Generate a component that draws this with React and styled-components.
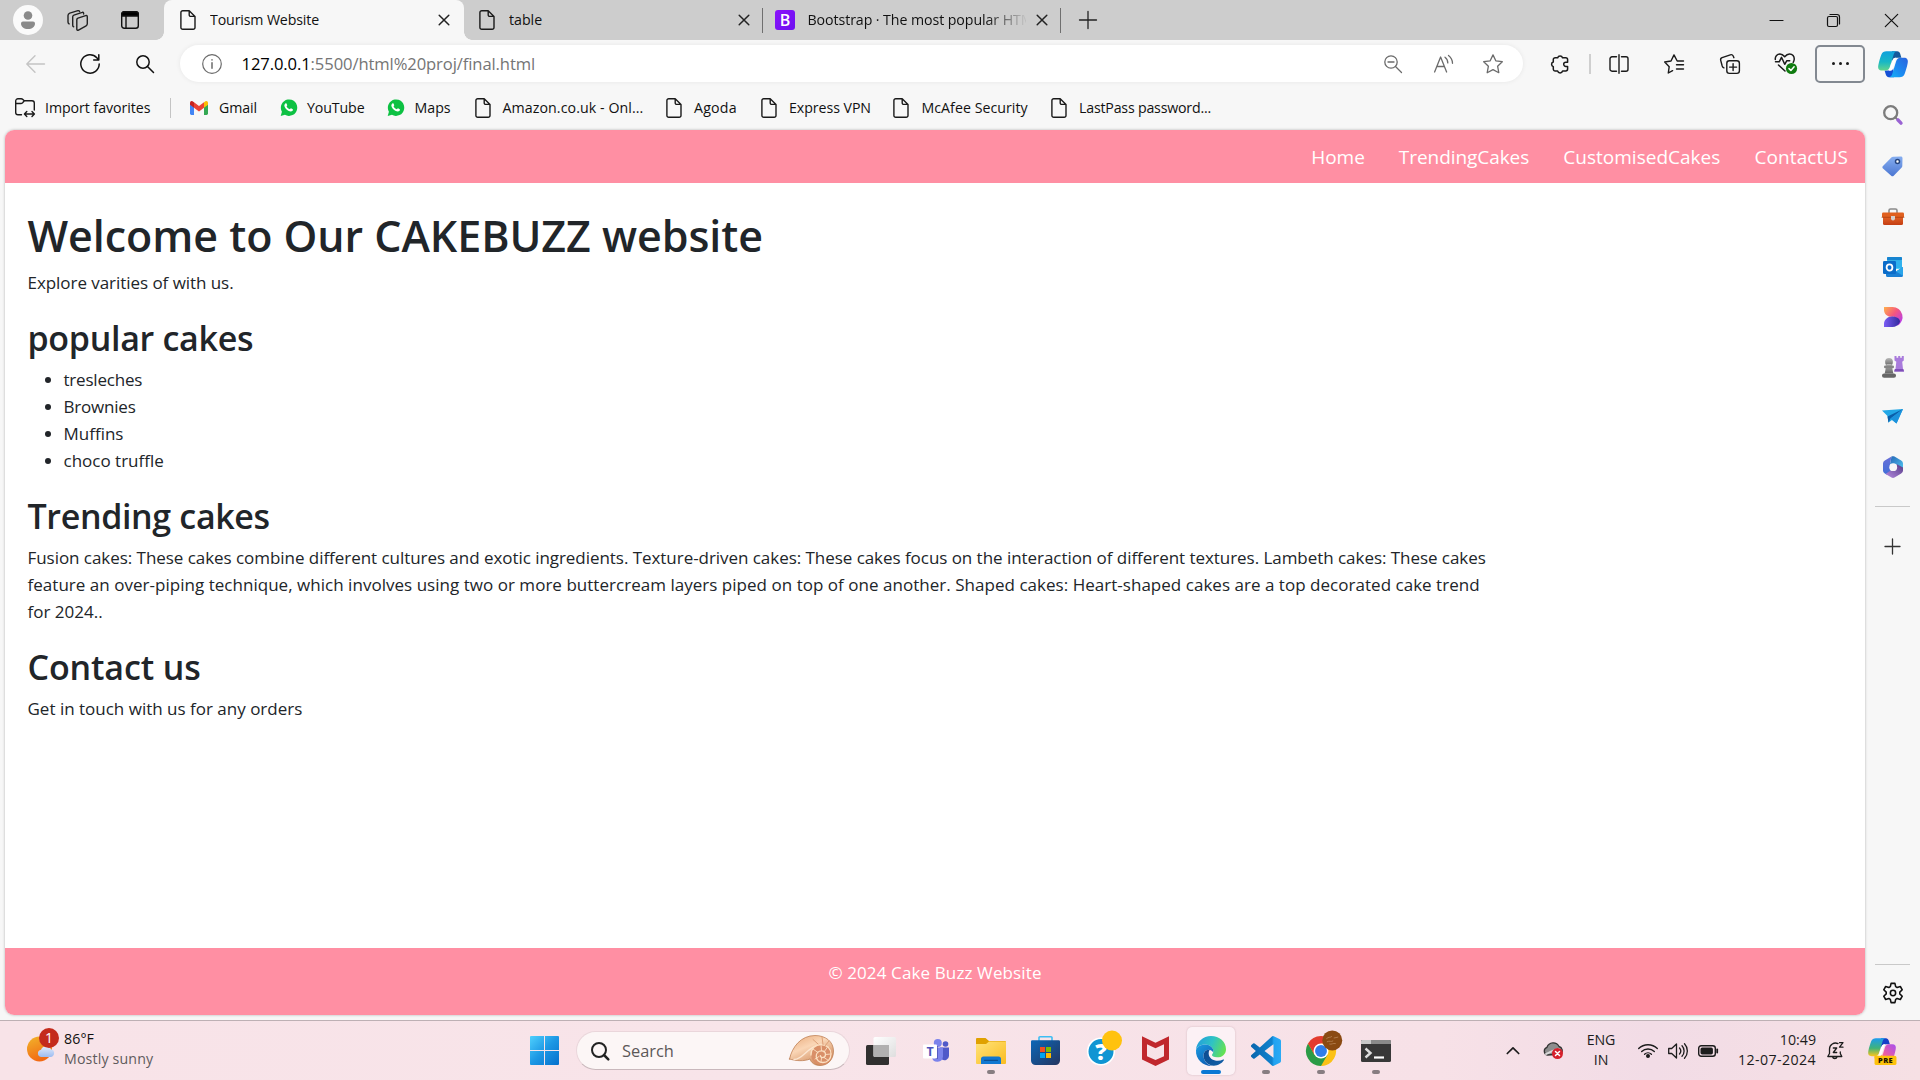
import React from "react";
import styled, { createGlobalStyle, css } from "styled-components";

const GlobalStyle = createGlobalStyle`
  *, *::before, *::after { box-sizing: border-box; }
  body {
    margin: 0;
    background: #f7f7f7;
    color: #111;
    font-family: "Open Sans", "Noto Sans", sans-serif;
    overflow: hidden;
  }
`;

/* ---------- shared ---------- */

const Label = styled.span`
  font-size: ${(p) => p.$size || 14.2}px;
  line-height: 20px;
  letter-spacing: ${(p) => p.$track || 0}px;
  color: ${(p) => p.$color || "inherit"};
  white-space: nowrap;
`;

const Glyph = styled.svg`
  display: block;
  flex: none;
  width: ${(p) => p.$w}px;
  height: ${(p) => p.$h || p.$w}px;
  fill: none;
  stroke: ${(p) => p.$stroke || "none"};
  stroke-width: ${(p) => p.$sw || 1.4};
  stroke-linecap: round;
  stroke-linejoin: round;
  overflow: visible;
`;

const Screen = styled.div`
  width: 1920px;
  height: 1080px;
  display: flex;
  flex-direction: column;
  background: #f7f7f7;
`;

/* ---------- tab strip ---------- */

const TabStrip = styled.header`
  display: flex;
  height: 40px;
  flex: none;
  background: #cdcdcd;
`;

const StripTools = styled.div`
  display: flex;
  align-items: center;
  width: 164px;
  padding-left: 13px;
  gap: 24px;
`;

const Avatar = styled.div`
  width: 30px;
  height: 30px;
  border-radius: 50%;
  background: #fafafa;
  display: grid;
  place-items: center;
`;

const StripSlot = styled.div`
  width: ${(p) => p.$w}px;
  display: grid;
  place-items: center;
`;

const Tab = styled.div`
  position: relative;
  display: flex;
  align-items: center;
  width: ${(p) => p.$w}px;
  padding-left: ${(p) => p.$pad}px;
  padding-right: ${(p) => (p.$active ? 15 : 13.5)}px;
  ${(p) =>
    p.$active &&
    css`
      background: #f7f7f7;
      border-radius: 8px 8px 0 0;
      &::before,
      &::after {
        content: "";
        position: absolute;
        bottom: 0;
        width: 8px;
        height: 8px;
      }
      &::before {
        left: -8px;
        background: radial-gradient(circle at 0 0, transparent 7.5px, #f7f7f7 8px);
      }
      &::after {
        right: -8px;
        background: radial-gradient(circle at 100% 0, transparent 7.5px, #f7f7f7 8px);
      }
    `}
`;

const TabTitle = styled(Label)`
  flex: 1;
  overflow: hidden;
  margin-left: ${(p) => p.$gap}px;
  ${(p) =>
    p.$fade &&
    css`
      margin-right: 11px;
      mask-image: linear-gradient(to right, #000 178px, rgba(0, 0, 0, 0.08) 216px);
    `}
`;

const TabDivider = styled.div`
  width: 1px;
  height: 25px;
  align-self: center;
  background: #6f6f6f;
`;

const BootstrapMark = styled.div`
  width: 20px;
  height: 20px;
  border-radius: 3px;
  background: linear-gradient(135deg, #8a12fb, #6d10f0);
  color: #fff;
  font-size: 16px;
  font-weight: 600;
  line-height: 20px;
  text-align: center;
`;

const WindowControls = styled.div`
  margin-left: auto;
  display: flex;
`;

const ControlButton = styled.div`
  width: 57.5px;
  display: grid;
  place-items: center;
`;

/* ---------- browser body ---------- */

const BrowserBody = styled.div`
  display: flex;
  height: 980px;
  flex: none;
`;

const MainColumn = styled.div`
  width: 1865px;
  display: flex;
  flex-direction: column;
`;

const Toolbar = styled.div`
  display: flex;
  align-items: center;
  height: 47px;
`;

const NavButton = styled.div`
  width: 55px;
  display: grid;
  place-items: center;
`;

const NavGroup = styled.div`
  display: flex;
  width: 180px;
  padding-left: 7.5px;
`;

const AddressBar = styled.div`
  display: flex;
  align-items: center;
  width: 1343px;
  height: 37px;
  padding: 0 5px 0 22px;
  border-radius: 19px;
  background: #fff;
  box-shadow: 0 0 5px rgba(0, 0, 0, 0.07);
`;

const Url = styled(Label)`
  margin-left: 19.5px;
  margin-right: auto;
`;

const BarAction = styled.div`
  width: 50px;
  display: grid;
  place-items: center;
`;

const ToolGroup = styled.div`
  display: flex;
  align-items: center;
  margin-left: 8.5px;
`;

const ToolButton = styled.div`
  width: ${(p) => p.$w || 55.5}px;
  display: grid;
  place-items: center;
`;

const ToolDivider = styled.div`
  width: 2px;
  height: 20px;
  background: #cfcfcf;
`;

const MenuButton = styled.div`
  width: 50px;
  height: 38px;
  margin-left: auto;
  border: 2px solid #838991;
  border-radius: 5px;
  display: flex;
  align-items: center;
  justify-content: center;
  gap: 4px;
`;

const Dot = styled.i`
  width: 3px;
  height: 3px;
  border-radius: 50%;
  background: #1a1a1a;
`;

const Bookmarks = styled.div`
  display: flex;
  align-items: center;
  height: 43px;
  padding-left: 15px;
  padding-bottom: 1.5px;
`;

const Bookmark = styled.div`
  display: flex;
  align-items: center;
  width: ${(p) => p.$w}px;
`;

const BookmarkIcon = styled.div`
  width: ${(p) => p.$w}px;
  flex: none;
`;

const BookmarkDivider = styled.div`
  width: 1px;
  height: 20px;
  margin-right: 19px;
  background: #c4c4c4;
`;

/* ---------- page ---------- */

const Viewport = styled.div`
  display: flex;
  flex-direction: column;
  width: 1860px;
  height: 885px;
  margin-left: 5px;
  border-radius: 9px;
  overflow: hidden;
  background: #fff;
  box-shadow: 0 0 3px rgba(0, 0, 0, 0.28);
`;

const SiteNav = styled.nav`
  display: flex;
  align-items: center;
  justify-content: flex-end;
  gap: 34px;
  height: 53px;
  padding: 0 17px 0 0;
  background: #ff8fa3;
  color: #fff;
`;

const Article = styled.main`
  flex: 1;
  padding: 22.5px 22.5px 0;
  color: #212529;
`;

const Title = styled.h1`
  margin: 0 0 4px;
  font-size: 43px;
  line-height: 59px;
  font-weight: 600;
  letter-spacing: -0.04px;
`;

const Heading = styled.h2`
  margin: 0 0 4px;
  font-size: 34px;
  line-height: 48.2px;
  font-weight: 600;
  letter-spacing: ${(p) => p.$track || -0.3}px;
`;

const Paragraph = styled.p`
  margin: 0 0 18px;
  font-size: 17px;
  line-height: 27px;
`;

const Line = styled.span`
  display: block;
  white-space: nowrap;
  letter-spacing: ${(p) => p.$track || 0}px;
`;

const CakeList = styled.ul`
  margin: 0 0 18px;
  padding-left: 36px;
  font-size: 17px;
  line-height: 27px;
`;

const Cake = styled.li`
  letter-spacing: ${(p) => p.$track || 0}px;
`;

const SiteFooter = styled.footer`
  height: 67px;
  padding-top: 14px;
  background: #ff8fa3;
  color: #fff;
  text-align: center;
`;

/* ---------- sidebar ---------- */

const Sidebar = styled.aside`
  width: 55px;
  display: flex;
  flex-direction: column;
  align-items: center;
`;

const SideSlot = styled.div`
  width: 55px;
  height: ${(p) => p.$h || 50}px;
  flex: none;
  display: grid;
  place-items: center;
`;

const SideDivider = styled.div`
  width: 35px;
  height: 1px;
  background: #c9c9c9;
`;

const SideBottom = styled.div`
  margin-top: auto;
  display: flex;
  flex-direction: column;
  align-items: center;
`;

/* ---------- taskbar ---------- */

const Taskbar = styled.div`
  display: grid;
  grid-template-columns: 517px 886px 1fr;
  height: 60px;
  border-top: 1px solid #bdb0b4;
  background: linear-gradient(90deg, #f8e3e8 0%, #f8e4e9 40%, #f7e1e7 75%, #f2dce6 86%, #f6e0e4 100%);
`;

const Weather = styled.div`
  display: flex;
  padding-left: 26px;
  padding-top: 5px;
  gap: 8px;
`;

const TwoLines = styled.div`
  display: flex;
  flex-direction: column;
  align-items: ${(p) => p.$align || "flex-start"};
  padding-top: ${(p) => p.$top || 0}px;
  padding-bottom: ${(p) => p.$bottom || 0}px;
`;

const Apps = styled.div`
  display: flex;
  align-items: center;
`;

const AppSlot = styled.div`
  position: relative;
  width: 55px;
  height: 59px;
  display: grid;
  place-items: center;
`;

const ActiveTile = styled.div`
  width: 48px;
  height: 48px;
  border-radius: 5px;
  background: #fcf1f5;
  box-shadow: 0 0 2px rgba(120, 80, 95, 0.3);
  display: grid;
  place-items: center;
`;

const Running = styled.i`
  position: absolute;
  bottom: 6px;
  left: 50%;
  transform: translateX(-50%);
  width: ${(p) => (p.$active ? 20 : 8)}px;
  height: 4px;
  border-radius: 2px;
  background: ${(p) => (p.$active ? "#0a78d4" : "#877d81")};
`;

const SearchPill = styled.div`
  display: flex;
  align-items: center;
  width: 274px;
  height: 39px;
  margin: 0 4px;
  padding: 0 15px 0 14px;
  border-radius: 20px;
  background: #fcf6f6;
  border: 1px solid #ead6db;
  border-bottom-color: #c9b8bc;
  gap: 13px;
`;

const ShellSlot = styled.div`
  margin-left: auto;
`;

const Tray = styled.div`
  display: flex;
  align-items: center;
  justify-content: flex-end;
  padding-right: 24px;
  color: #1c1c1c;
`;

const TraySlot = styled.div`
  width: ${(p) => p.$w}px;
  display: flex;
  justify-content: ${(p) => p.$justify || "center"};
`;

/* ---------- icons ---------- */

const PageIcon = () => (
  <Glyph $w={16} $h={20} viewBox="0 0 16 20" $stroke="#1a1a1a" $sw={1.4}>
    <path d="M2.7.8h6.5L15 6.4v11a1.8 1.8 0 0 1-1.8 1.8H2.7A1.8 1.8 0 0 1 .9 17.400V2.600A1.8 1.8 0 0 1 2.700.8zM9.200 1v3.900A1.500 1.500 0 0 0 10.700 6.400H14.800" />
  </Glyph>
);

const CloseIcon = () => (
  <Glyph $w={10} viewBox="0 0 10 10" $stroke="#222" $sw={1.5}>
    <path d="M.2.2l9.600 9.600M9.800.2L.2 9.800" />
  </Glyph>
);

const Whatsapp = () => (
  <Glyph $w={17} viewBox="0 0 24 24">
    <path d="M1 24l1.700-6A11.600 11.600 0 1 1 7 22.300z" fill="#0dc143" />
    <path
      d="M8.300 6c.5 0 .8 0 1 .6l.9 2c.1.400 0 .6-.9 1.700 0 1.100 2.500 3.800 4.700 4.300.8-.7 1.100-1.600 1.600-1.400l2.400 1.100c.4.200.3 1.600-.3 2.200-1.500 1.500-3.600 1.200-6 0-2.800-1.500-5.300-4.400-5.600-6.900C6 8 7.100 6.100 8.300 6z"
      fill="#fff"
    />
  </Glyph>
);

const Gmail = () => (
  <Glyph $w={18} $h={14} viewBox="0 0 18 14">
    <path d="M0 3l4 3v8H1.400A1.400 1.400 0 0 1 0 12.600z" fill="#4285f4" />
    <path d="M18 3l-4 3v8h2.600a1.400 1.400 0 0 0 1.400-1.400z" fill="#34a853" />
    <path d="M14 1.200L15.500.3C16.800-.4 18 .6 18 2v1.700L14 6.700z" fill="#fbbc04" />
    <path d="M4 1.200L2.500.3C1.200-.4 0 .6 0 2v1.700L4 6.700z" fill="#c5221f" />
    <path d="M4 1.200l5 3.900 5-3.900v5.500l-5 3.800-5-3.800z" fill="#ea4335" />
  </Glyph>
);

const Workspaces = () => (
  <Glyph $w={21} viewBox="0 0 21 21" $stroke="#222" $sw={1.4}>
    <path d="M11 8.200l7.600-2.600c1-.3 1.700.1 1.700 1.100v7.100c0 .9-.4 1.600-1.200 2l-7.600 4.300c-.9.500-1.700.1-1.700-.9V9.800c0-.8.4-1.300 1.200-1.600z" />
    <path d="M16.600 4V3.300c0-.9-.6-1.300-1.400-1L6.900 5.100c-.8.300-1.200.8-1.200 1.600v8.500c0 .8.300 1.300 1 1.600M12.600 1.500c-.3-.8-.9-1-1.700-.8L2.800 3.200C1.700 3.600 1 4.400 1 5.500v6.400c0 .9.300 1.500 1.100 2" />
  </Glyph>
);

const VerticalTabs = () => (
  <Glyph $w={18} viewBox="0 0 18 18" $stroke="#111" $sw={1.4}>
    <rect x=".7" y=".7" width="16.600" height="16.600" rx="2.500" />
    <path d="M.7 3.200A2.500 2.500 0 0 1 3.200.7h11.600a2.500 2.500 0 0 1 2.500 2.500V5H.7z" fill="#000" />
    <path d="M5 5v12" />
  </Glyph>
);

const Extension = () => (
  <Glyph $w={20} viewBox="0 0 20 20" $stroke="#1a1a1a" $sw={1.5}>
    <path d="M5.200 3.700h2.500a2.500 2.500 0 0 1 4.800 0h3.200a1.900 1.900 0 0 1 1.900 1.900v2.600h-1.800a2.100 2.100 0 0 0 0 4.200h1.800v2.700a1.900 1.900 0 0 1-1.900 1.900h-3.100a2.600 2.600 0 0 1-5 0H5.200a1.900 1.900 0 0 1-1.900-1.900v-2.500a2.400 2.400 0 0 1 0-4.600V5.600a1.900 1.900 0 0 1 1.900-1.900z" />
  </Glyph>
);

const SplitScreen = () => (
  <Glyph $w={20} viewBox="0 0 20 20" $stroke="#1a1a1a" $sw={1.4}>
    <path d="M7.500 2.800H3A2 2 0 0 0 1 4.800v10.400a2 2 0 0 0 2 2h4.500M12.500 2.800H17a2 2 0 0 1 2 2v10.400a2 2 0 0 1-2 2h-4.500M10 .8v18.400" />
  </Glyph>
);

const Favorites = () => (
  <Glyph $w={20} viewBox="0 0 20 20" $stroke="#1a1a1a" $sw={1.4}>
    <path d="M19.500 7h-6.300L10 .9 7 7 .7 8l4.500 4.700-.9 6.300 4.300-2.300M12.500 10.800h7M12.500 15h7" />
  </Glyph>
);

const Collections = () => (
  <Glyph $w={20} viewBox="0 0 20 20" $stroke="#1a1a1a" $sw={1.4}>
    <rect x="6.800" y="6.800" width="12.600" height="12.600" rx="2.600" />
    <path d="M13.100 9.600v7M9.600 13.100h7M3.900 13.900C2.800 13.500 2.500 12.900 2.200 12L.7 6.400c-.3-1.200.2-2.300 1.400-2.700L10.300.8c1.300-.4 2.400.1 2.900 1.200l.7 1.700" />
  </Glyph>
);

const Essentials = () => (
  <Glyph $w={24} $h={21} viewBox="0 0 24 21" $stroke="#1a1a1a" $sw={1.5}>
    <path d="M1.300 6.500C1 3 3.300 1 6 1c2 0 3.500 1.300 4.700 2.800C12 2.200 13.500 1 15.500 1c3 0 5 2.400 4.700 5.500-.1 1-.5 2-1 2.800M1.500 8.800h3.700l2.300-4.500 3.200 7 2-3.500h3M4.500 12l6.500 6" />
    <circle cx="17.500" cy="15.500" r="5.600" fill="#0f7b0f" stroke="none" />
    <path d="M15 15.600l1.900 1.800 3.200-3.600" stroke="#fff" />
  </Glyph>
);

const Copilot = ({ size = 30, pre }) => {
  const id = pre ? "cpPre" : "cpMain";
  return (
    <Glyph $w={size} $h={size * 0.88} viewBox="0 0 30 26.400">
      <defs>
        <linearGradient id={`${id}A`} x1="0" y1="0" x2="0" y2="1">
          <stop offset="0" stopColor={pre ? "#1c9bf0" : "#0fa0dd"} />
          <stop offset=".55" stopColor={pre ? "#3fb37a" : "#18b7c6"} />
          <stop offset="1" stopColor={pre ? "#ffc61a" : "#63d58c"} />
        </linearGradient>
        <linearGradient id={`${id}B`} x1="1" y1="0" x2="0" y2="1">
          <stop offset="0" stopColor={pre ? "#a64ef0" : "#2a62dd"} />
          <stop offset=".6" stopColor={pre ? "#ef5f9f" : "#1b8df2"} />
          <stop offset="1" stopColor={pre ? "#ff9f62" : "#12b4f5"} />
        </linearGradient>
      </defs>
      <path d="M14 .2h5.200c1.600 0 2.600 1.200 3 2.600l1.200 4h-5.600c-2 0-2.600 1-3 2.400l-1.200 3.600z" fill={pre ? "#1540c8" : "#155a9c"} />
      <path d="M16 26.200h-5.200c-1.600 0-2.600-1.200-3-2.600l-1.200-4h5.600c2 0 2.600-1 3-2.400z" fill={pre ? "#f9a03f" : "#1550d6"} />
      <path d="M8.500.2H19c-2 0-2.800 1.600-3.400 3.600L12 15.600c-.8 2.700-2 4-4.600 4H4c-3 0-4.400-2-3.700-5.300C1 10.500 2.300 6.200 3.400 3.500 4.300 1.200 6 .2 8.500.2z" fill={`url(#${id}A)`} />
      <path d="M21.500 26.200H11c2 0 2.800-1.600 3.400-3.600L18 10.800c.8-2.700 2-4 4.600-4H26c3 0 4.400 2 3.700 5.300-.7 3.800-2 8.100-3.100 10.800-.9 2.300-2.600 3.300-5.100 3.300z" fill={`url(#${id}B)`} />
      <path d="M17.300 7.500c-1.500.3-2.100 1.300-2.500 2.700l-2 6.500c-.3 1-.6 1.700-1 2.200 1.400-.3 2-1.200 2.400-2.500l2.100-6.600c.3-1 .6-1.700 1-2.300z" fill="#fff" stroke="#fff" strokeWidth="1.600" />
      {pre && <rect x="7" y="19" width="23.500" height="10" rx="2" fill="#fdc20b" />}
      {pre && (
        <text x="18.800" y="26.700" fontSize="8" fontWeight="800" fill="#1a1400" textAnchor="middle" letterSpacing=".4">
          PRE
        </text>
      )}
    </Glyph>
  );
};

const SideSearch = () => (
  <Glyph $w={20} viewBox="0 0 20 20">
    <circle cx="7.700" cy="7.700" r="6.500" stroke="#7c7c7c" strokeWidth="2.300" />
    <path d="M14.800 14.800l3.200 3.300" stroke="#9a63d3" strokeWidth="3.400" />
    <path d="M12.200 12.200l1 1" stroke="#7c7c7c" strokeWidth="2" />
  </Glyph>
);

const Shopping = () => (
  <Glyph $w={21} viewBox="0 0 21 21">
    <defs>
      <linearGradient id="tagFill" x1="0" y1="0" x2="0" y2="1">
        <stop offset="0" stopColor="#86aef0" />
        <stop offset="1" stopColor="#4b76d2" />
      </linearGradient>
    </defs>
    <path d="M11 .7L18.800.5c1 0 1.700.6 1.700 1.600l-.2 8c0 .6-.2 1-.6 1.400l-8 8.200c-.8.800-1.700.8-2.500 0L1 12.500c-.8-.8-.8-1.700 0-2.500l8.600-8.700c.4-.4.8-.6 1.400-.6z" fill="url(#tagFill)" />
    <circle cx="15.500" cy="5.500" r="2" fill="#fff" stroke="#27467f" strokeWidth="1.500" />
  </Glyph>
);

const Toolbox = () => (
  <Glyph $w={22} $h={17} viewBox="0 0 22 17">
    <defs>
      <linearGradient id="boxFill" x1="0" y1="0" x2="0" y2="1">
        <stop offset="0" stopColor="#e86b2a" />
        <stop offset="1" stopColor="#c43d12" />
      </linearGradient>
    </defs>
    <path d="M7 5V2.500A1.500 1.500 0 0 1 8.500 1h5A1.500 1.500 0 0 1 15 2.500V5" stroke="#8b8b8b" strokeWidth="1.600" />
    <rect x="1" y="7" width="20" height="10" rx="1.500" fill="url(#boxFill)" />
    <rect x="0" y="4.500" width="22" height="5" rx="1.200" fill="#e0601f" />
    <path d="M0 9.300h22" stroke="#a63a10" strokeWidth=".7" />
    <path d="M9 8h4v2.600a2 2 0 0 1-4 0z" fill="#d5cfcc" />
  </Glyph>
);

const Outlook = () => (
  <Glyph $w={20} viewBox="0 0 20 20">
    <rect x="4" y="0" width="15" height="12" rx="1" fill="#50d0f5" />
    <rect x="4" y="0" width="15" height="3.500" rx="1" fill="#1784d0" />
    <path d="M11 3.500h8V11h-8z" fill="#2fb2ee" />
    <path d="M3 9.500l10 5 7-4.500v8.500a1.500 1.500 0 0 1-1.500 1.500h-14A1.500 1.500 0 0 1 3 18.500z" fill="#1a7fd4" />
    <path d="M20 10v8.700L13 14.500z" fill="#2aa5ea" />
    <rect x="0" y="4" width="13" height="13" rx="1.300" fill="#0a6cc9" />
    <ellipse cx="6.500" cy="10.500" rx="2.900" ry="3.200" stroke="#fff" strokeWidth="1.800" />
  </Glyph>
);

const Designer = () => (
  <Glyph $w={20} $h={22} viewBox="0 0 20 22">
    <defs>
      <linearGradient id="dsTop" x1="0" y1="0" x2="1" y2=".8">
        <stop offset="0" stopColor="#ffb14a" />
        <stop offset=".5" stopColor="#f5577d" />
        <stop offset="1" stopColor="#b43cf0" />
      </linearGradient>
      <linearGradient id="dsBottom" x1="0" y1="0" x2="1" y2="0">
        <stop offset="0" stopColor="#7a5cf5" />
        <stop offset="1" stopColor="#312a9c" />
      </linearGradient>
    </defs>
    <path d="M1 1h8.500a10 10 0 0 1 5 18.700L11 10.500C5 12 1 8 1 4z" fill="url(#dsTop)" />
    <path d="M1 21v-3.200c0-4 3.500-7.300 8-7.300 5 0 8 2.300 8 5.500-1.800 3.300-4.500 5-7.500 5z" fill="url(#dsBottom)" />
  </Glyph>
);

const Games = () => (
  <Glyph $w={22} viewBox="0 0 22 22">
    <defs>
      <linearGradient id="pawn" x1="0" y1="0" x2="0" y2="1">
        <stop offset="0" stopColor="#b8b8b8" />
        <stop offset="1" stopColor="#656565" />
      </linearGradient>
    </defs>
    <path d="M12.500 0h2v1.800h1.700V0h2v1.800h1.600V0h2v4.500l-1.600 1.300.8 7.200 1 2.500h-9.500l1-2.500.8-7.200-1.800-1.300z" fill="#a97bdc" />
    <path d="M12.800 13h8.500l.8 2.600H12z" fill="#7f4fb8" />
    <circle cx="7" cy="6" r="3.900" fill="url(#pawn)" />
    <path d="M4.500 8h5l1.800 9.500H2.700z" fill="url(#pawn)" />
    <rect x="2" y="9.500" width="10" height="2.700" rx="1.300" fill="#858585" />
    <rect x="0" y="17.500" width="14" height="4.300" rx="2.100" fill="#666" />
  </Glyph>
);

const Drop = () => (
  <Glyph $w={21} $h={15} viewBox="0 0 21 15">
    <path d="M0 1.500L21 0 14.500 14.500 10 11 6.500 13.500 5.500 7z" fill="#22a7e6" />
    <path d="M5.500 7.500L21 0 8.500 9.500 6.500 13.800z" fill="#0b5ea9" />
    <path d="M8.500 9.500L21 0l-6.500 14.500z" fill="#1c92dc" />
  </Glyph>
);

const Office = () => (
  <Glyph $w={20} $h={22} viewBox="0 0 20 22">
    <defs>
      <linearGradient id="ofA" x1="0" y1="0" x2="0" y2="1">
        <stop offset="0" stopColor="#6a6fd8" />
        <stop offset="1" stopColor="#3f6fd8" />
      </linearGradient>
      <linearGradient id="ofB" x1="0" y1="0" x2="1" y2="1">
        <stop offset="0" stopColor="#2465b5" />
        <stop offset="1" stopColor="#4fc3f0" />
      </linearGradient>
      <linearGradient id="ofC" x1="0" y1="1" x2="1" y2="0">
        <stop offset="0" stopColor="#b58ae0" />
        <stop offset="1" stopColor="#553a86" />
      </linearGradient>
    </defs>
    <path d="M8.500.5L1.800 4.400A3.400 3.400 0 0 0 0 7.400v7.200c0 1.200.7 2.300 1.800 2.900l2.700 1.500L8 14.500 7 8z" fill="url(#ofA)" />
    <path d="M8.500.5c1-.5 2-.5 3 0l6.700 3.900A3.400 3.400 0 0 1 20 7.400v5.100L13 8.200 7 8.500z" fill="url(#ofB)" />
    <path d="M20 11.500v3.100c0 1.200-.7 2.300-1.800 2.900l-6.700 4c-1 .5-2 .5-3 0L2.500 18l5-3.500h4.500l1.500-3V8z" fill="url(#ofC)" />
    <circle cx="10.200" cy="11.200" r="3.900" fill="#f7f7f7" />
  </Glyph>
);

const Gear = () => (
  <Glyph $w={22} viewBox="0 0 24 24" $stroke="#111" $sw={1.7}>
    <path d="M9.900 1.500h4.200l.8 3.600 1.600.9 3.500-1.100 2.100 3.600-2.700 2.500v2l2.700 2.500-2.100 3.600-3.500-1.100-1.600.9-.8 3.600H9.900l-.8-3.600-1.600-.9L4 19.100l-2.100-3.600L4.600 13v-2L1.900 8.500 4 4.900 7.500 6l1.600-.9z" />
    <circle cx="12" cy="12" r="2.900" />
  </Glyph>
);

const WeatherIcon = () => (
  <Glyph $w={30} $h={40} viewBox="0 0 30 40">
    <defs>
      <linearGradient id="sun" x1="0" y1="0" x2=".4" y2="1">
        <stop offset="0" stopColor="#f2b52b" />
        <stop offset="1" stopColor="#f26a14" />
      </linearGradient>
      <linearGradient id="cloud" x1="0" y1="0" x2="0" y2="1">
        <stop offset="0" stopColor="#e3edfc" />
        <stop offset="1" stopColor="#9dbcf0" />
      </linearGradient>
    </defs>
    <ellipse cx="13.500" cy="23" rx="12.500" ry="12.500" fill="url(#sun)" />
    <path d="M15 31a3.700 3.700 0 0 1 0-7.300 5.500 5.500 0 0 1 10-.5 4 4 0 0 1 0 7.800z" fill="url(#cloud)" />
    <circle cx="23" cy="12" r="10" fill="#c42b1c" />
    <text x="23" y="17" fontSize="14" fill="#fff" textAnchor="middle">
      1
    </text>
  </Glyph>
);

const StartIcon = () => (
  <Glyph $w={29} viewBox="0 0 29 29">
    <defs>
      <linearGradient id="win" x1="0" y1="0" x2="1" y2="1">
        <stop offset="0" stopColor="#4fd0fd" />
        <stop offset=".5" stopColor="#1c97e4" />
        <stop offset="1" stopColor="#0670cc" />
      </linearGradient>
    </defs>
    <path d="M1 0h13v14H0V1a1 1 0 0 1 1-1zM15 0h13a1 1 0 0 1 1 1v13H15zM0 15h14v14H1a1 1 0 0 1-1-1zM15 15h14v13a1 1 0 0 1-1 1H15z" fill="url(#win)" />
  </Glyph>
);

const Shell = () => (
  <Glyph $w={45} $h={31} viewBox="0 0 45 31">
    <defs>
      <linearGradient id="shell" x1="0" y1="0" x2=".6" y2="1">
        <stop offset="0" stopColor="#e8a878" />
        <stop offset=".45" stopColor="#fad6b6" />
        <stop offset="1" stopColor="#cf8a5c" />
      </linearGradient>
    </defs>
    <path d="M.5 24C3 12 12 .5 26 .5c10.500 0 18.500 6 18.500 15.500 0 9-6 14.500-13.500 14.500-5.500 0-9-3-10-6.500C15 26.500 7 26 .5 24z" fill="url(#shell)" stroke="#b87648" strokeWidth=".7" />
    <path d="M5 24.500C15 24 17 12 32 9.500" stroke="#fbe6d2" strokeWidth="1.300" />
    <circle cx="32.500" cy="19.500" r="10.500" fill="#d98f68" />
    <path d="M22 20c0-6.500 4.500-10.500 10-10.500 6 0 10 4 10 9.500 0 5-3.500 8.500-8 8.500-4 0-6.800-2.700-6.800-6.200 0-3.200 2.300-5.400 5.300-5.400 2.500 0 4 1.700 4 3.700s-1.400 3-2.900 3-2.200-1-2.200-2" stroke="#fbe0c2" strokeWidth="1.300" />
    <path d="M32 9.500l.5 6M39 11.500l-4 5.500M42 19l-5.500.5M39.500 25.500L35 22.500M32 27l.6-4.500M26 24l4-2.500M24 14l5 3.500" stroke="#fbe0c2" strokeWidth=".9" />
    <path d="M24 4.500l5 4.500M33 2l1 7.500M40 6l-4 5" stroke="#d99a70" strokeWidth=".9" />
  </Glyph>
);

const TaskView = () => (
  <Glyph $w={30} $h={28} viewBox="0 0 30 28">
    <defs>
      <linearGradient id="tvFront" x1="0" y1="0" x2="1" y2="1">
        <stop offset="0" stopColor="#fff" />
        <stop offset="1" stopColor="#dedede" />
      </linearGradient>
    </defs>
    <rect x="0" y="8" width="23" height="20" rx="1.500" fill="#31302f" />
    <rect x="7.500" y="0" width="22.500" height="20" rx="1.500" fill="url(#tvFront)" />
    <path d="M7.500 8H23v12H9a1.500 1.500 0 0 1-1.500-1.500z" fill="#b1b0b0" />
  </Glyph>
);

const Teams = () => (
  <Glyph $w={26} $h={24} viewBox="0 0 26 24">
    <circle cx="14.800" cy="4" r="4" fill="#7b83eb" />
    <circle cx="22.500" cy="5" r="2.800" fill="#5059c9" />
    <path d="M17 8.500h9V17a4.500 4.500 0 0 1-7 3.500z" fill="#5059c9" />
    <path d="M9 8.500h11v9a5.700 5.700 0 0 1-11.200 1z" fill="#7b83eb" />
    <rect x="12" y="7" width="3" height="13" fill="#3d44a8" opacity=".6" />
    <rect x="0" y="5.500" width="14" height="14" rx="1" fill="#fff" />
    <text x="7" y="17" fontSize="12.500" fontWeight="700" fill="#4b53bc" textAnchor="middle">
      T
    </text>
  </Glyph>
);

const Explorer = () => (
  <Glyph $w={30} $h={26} viewBox="0 0 30 26">
    <defs>
      <linearGradient id="folder" x1="0" y1="0" x2="1" y2="1">
        <stop offset="0" stopColor="#ffe37a" />
        <stop offset="1" stopColor="#fabc20" />
      </linearGradient>
    </defs>
    <path d="M0 1a1 1 0 0 1 1-1h8.500l3.500 3H29a1 1 0 0 1 1 1v10H0z" fill="#e0a100" />
    <path d="M0 6h10l3-2.500h17V25a1 1 0 0 1-1 1H1a1 1 0 0 1-1-1z" fill="url(#folder)" />
    <path d="M5 26v-5a2.500 2.500 0 0 1 2.500-2.500h15A2.500 2.500 0 0 1 25 21v5z" fill="#1177d1" />
    <path d="M8.500 22.300h13" stroke="#0c4f93" strokeWidth="1.200" />
  </Glyph>
);

const Store = () => (
  <Glyph $w={29} viewBox="0 0 29 29">
    <defs>
      <linearGradient id="store" x1="0" y1="0" x2="1" y2="1">
        <stop offset="0" stopColor="#0b67b8" />
        <stop offset="1" stopColor="#25355f" />
      </linearGradient>
    </defs>
    <path d="M8 5V1.800A1 1 0 0 1 9 .8h11a1 1 0 0 1 1 1V5" stroke="#3ebdf3" strokeWidth="1.600" />
    <path d="M0 5.500A1.200 1.200 0 0 1 1.200 4.300h26.600A1.200 1.200 0 0 1 29 5.500v19a4.500 4.500 0 0 1-4.500 4.500h-20A4.500 4.500 0 0 1 0 24.500z" fill="url(#store)" />
    <rect x="9" y="11" width="5" height="5" fill="#f25022" />
    <rect x="15" y="11" width="5" height="5" fill="#7fba00" />
    <rect x="9" y="17" width="5" height="5" fill="#00a4ef" />
    <rect x="15" y="17" width="5" height="5" fill="#ffb900" />
  </Glyph>
);

const Help = () => (
  <Glyph $w={28} viewBox="0 0 28 28">
    <circle cx="14" cy="14.500" r="13.300" fill="#1095d3" stroke="#fff" strokeWidth="1.600" />
    <text x="14" y="23" fontSize="23" fontWeight="800" fill="#fff" textAnchor="middle">
      ?
    </text>
    <circle cx="25" cy="3.500" r="10" fill="#ffc20e" />
  </Glyph>
);

const McAfee = () => (
  <Glyph $w={27} $h={30} viewBox="0 0 27 30">
    <path d="M0 .3l13.500 6.500L27 .3v23.200L13.500 30 0 23.500zM5 8.200v12L13.500 24l8.500-3.800v-12l-8.500 4.100z" fill="#c0272d" fillRule="evenodd" />
  </Glyph>
);

const Edge = () => (
  <Glyph $w={30} viewBox="0 0 256 256">
    <defs>
      <linearGradient id="edgeTop" x1="0" y1=".3" x2="1" y2=".6">
        <stop offset="0" stopColor="#239fdc" />
        <stop offset=".5" stopColor="#2fc3c4" />
        <stop offset="1" stopColor="#66e24f" />
      </linearGradient>
      <linearGradient id="edgeMid" x1="0" y1="0" x2=".6" y2="1">
        <stop offset="0" stopColor="#1b9de2" />
        <stop offset="1" stopColor="#0f5fb5" />
      </linearGradient>
      <linearGradient id="edgeLow" x1="0" y1="0" x2="1" y2="1">
        <stop offset="0" stopColor="#0c4a8f" />
        <stop offset="1" stopColor="#1260a8" />
      </linearGradient>
    </defs>
    <path d="M0 120C4 50 62 0 128 0c72 0 128 50 128 112 0 44-34 70-76 70-30 0-44-12-44-20 0-6 12-12 12-34 0-30-30-56-72-56C40 72 10 92 0 120z" fill="url(#edgeTop)" />
    <path d="M0 120c10-28 40-48 76-48 42 0 72 26 72 54 0 6-1 10-2 13-8-14-22-22-38-22-26 0-44 24-44 52 0 42 34 82 76 87C70 262-6 204 0 120z" fill="url(#edgeMid)" />
    <path d="M108 117c-26 0-44 24-44 52 0 46 40 84 88 84 38 0 68-20 86-46 3-5-1-9-6-6-50 26-124 4-124-54 0-12 3-22 9-29-3-1-6-1-9-1z" fill="url(#edgeLow)" />
  </Glyph>
);

const VSCode = () => (
  <Glyph $w={30} viewBox="0 0 24 24">
    <defs>
      <linearGradient id="code" x1="0" y1="0" x2="1" y2="0">
        <stop offset="0" stopColor="#0a66ad" />
        <stop offset=".7" stopColor="#0f82ce" />
        <stop offset=".76" stopColor="#22a2f0" />
        <stop offset="1" stopColor="#2aaaf5" />
      </linearGradient>
    </defs>
    <path d="M23.150 2.587L18.210.21a1.494 1.494 0 0 0-1.705.29l-9.460 8.630-4.120-3.128a.999.999 0 0 0-1.276.057L.327 7.261A1 1 0 0 0 .326 8.740L3.899 12 .326 15.260a1 1 0 0 0 .001 1.479L1.650 17.940a.999.999 0 0 0 1.276.057l4.120-3.128 9.460 8.630a1.492 1.492 0 0 0 1.704.29l4.942-2.377A1.500 1.500 0 0 0 24 20.060V3.939a1.500 1.500 0 0 0-.850-1.352zm-5.146 14.861L10.826 12l7.178-5.448v10.896z" fill="url(#code)" />
  </Glyph>
);

const Chrome = () => (
  <Glyph $w={30} viewBox="0 0 48 48">
    <circle cx="24" cy="24" r="23" fill="#fbc116" />
    <path d="M24 12h20.800A24 24 0 0 1 24 48l10.400-18z" fill="#fbc116" />
    <path d="M13.600 30L3.200 12A24 24 0 0 0 24 48l10.400-18z" fill="#2b9b46" />
    <path d="M24 12h20.800A24 24 0 0 0 3.200 12l10.400 18z" fill="#e33b2e" />
    <circle cx="24" cy="24" r="12" fill="#fff" />
    <circle cx="24" cy="24" r="9.500" fill="#2f7de9" />
    <circle cx="42" cy="7" r="16" fill="#8a4a12" />
    <path d="M33 4c3-3 6-1 8-3M34 9c4-2 6 1 9-1M38 13c3 1 5-2 9-1M45 3c2-1 4 0 6-1" stroke="#b58050" strokeWidth="1.400" />
  </Glyph>
);

const Terminal = () => (
  <Glyph $w={30} $h={22} viewBox="0 0 30 22">
    <rect x="0" y="0" width="30" height="22" rx="1.500" fill="#383838" />
    <path d="M0 4V1.500A1.500 1.500 0 0 1 1.500 0h27A1.500 1.500 0 0 1 30 1.500V4z" fill="#8a8a8a" />
    <path d="M1.500 0H10v4H0V1.500A1.500 1.500 0 0 1 1.500 0z" fill="#c9c9c9" />
    <path d="M4.500 8.500l5 4.500-5 4.500" stroke="#dedede" strokeWidth="2.400" strokeLinejoin="miter" strokeLinecap="butt" />
    <path d="M13 17.500h10" stroke="#fff" strokeWidth="2.200" strokeLinecap="butt" />
  </Glyph>
);

const bookmarks = [
  { name: "Gmail", w: 89.5, slot: 29, track: -0.1, icon: <Gmail /> },
  { name: "YouTube", w: 107, slot: 27.5, track: -0.12, icon: <Whatsapp /> },
  { name: "Maps", w: 88.5, slot: 28, icon: <Whatsapp /> },
  { name: "Amazon.co.uk - Onl...", w: 191, slot: 27.5, track: 0.08 },
  { name: "Agoda", w: 95, slot: 28, track: 0.2 },
  { name: "Express VPN", w: 132, slot: 28, track: -0.06 },
  { name: "McAfee Security", w: 158, slot: 28.500, track: 0.03 },
  { name: "LastPass password...", w: 170, slot: 28, track: -0.2 },
];

const sideApps = [
  { Icon: SideSearch, h: 53 },
  { Icon: Shopping },
  { Icon: Toolbox },
  { Icon: Outlook },
  { Icon: Designer },
  { Icon: Games },
  { Icon: Drop },
  { Icon: Office },
];

const runningApps = [
  { Icon: Teams },
  { Icon: Explorer, running: true },
  { Icon: Store },
  { Icon: Help },
  { Icon: McAfee },
  { Icon: Edge, active: true },
  { Icon: VSCode, running: true },
  { Icon: Chrome, running: true },
  { Icon: Terminal, running: true },
];

export default function App() {
  return (
    <Screen>
      <GlobalStyle />

      <TabStrip>
        <StripTools>
          <Avatar>
            <Glyph $w={14} $h={18} viewBox="0 0 14 18">
              <circle cx="7" cy="4.500" r="4.300" fill="#8a8a8a" />
              <path d="M2 10.500h10a2 2 0 0 1 2 2c0 3.500-3 5.500-7 5.500s-7-2-7-5.500a2 2 0 0 1 2-2z" fill="#8a8a8a" />
            </Glyph>
          </Avatar>
          <StripSlot $w={21}>
            <Workspaces />
          </StripSlot>
          <StripSlot $w={36}>
            <VerticalTabs />
          </StripSlot>
        </StripTools>
        <Tab $w={300} $pad={16} $active>
          <PageIcon />
          <TabTitle $gap={14} $track={-0.14}>Tourism Website</TabTitle>
          <CloseIcon />
        </Tab>
        <Tab $w={298} $pad={15}>
          <PageIcon />
          <TabTitle $gap={14}>table</TabTitle>
          <CloseIcon />
        </Tab>
        <TabDivider />
        <Tab $w={297} $pad={12}>
          <BootstrapMark>B</BootstrapMark>
          <TabTitle $gap={12.5} $track={-0.08} $fade>
            Bootstrap · The most popular HTML
          </TabTitle>
          <CloseIcon />
        </Tab>
        <TabDivider />
        <StripSlot $w={54}>
          <Glyph $w={18} viewBox="0 0 18 18" $stroke="#222" $sw={1.3}>
            <path d="M9 .5v17M.5 9h17" />
          </Glyph>
        </StripSlot>
        <WindowControls>
          <ControlButton>
            <Glyph $w={13} viewBox="0 0 13 13" $stroke="#111" $sw={1.2}>
              <path d="M0 6.500h13" />
            </Glyph>
          </ControlButton>
          <ControlButton>
            <Glyph $w={13} viewBox="0 0 13 13" $stroke="#111" $sw={1.2}>
              <rect x=".5" y="2.500" width="10" height="10" rx="1.500" />
              <path d="M3 .5h7a2.500 2.500 0 0 1 2.500 2.500v7" />
            </Glyph>
          </ControlButton>
          <ControlButton>
            <Glyph $w={13} viewBox="0 0 13 13" $stroke="#111" $sw={1.2}>
              <path d="M.3.3l12.400 12.400M12.700.3L.3 12.700" />
            </Glyph>
          </ControlButton>
        </WindowControls>
      </TabStrip>

      <BrowserBody>
        <MainColumn>
          <Toolbar>
            <NavGroup>
              <NavButton>
                <Glyph $w={19} $h={18} viewBox="0 0 19 18" $stroke="#c4c4c4">
                  <path d="M18.500 9H1M9 .8L.8 9 9 17.200" />
                </Glyph>
              </NavButton>
              <NavButton>
                <Glyph $w={20} viewBox="0 0 20 20" $stroke="#111" $sw={1.5}>
                  <path d="M19.200 10A9.200 9.200 0 1 1 16.800 3.800L18.600 5.700M18.800.8v5.100h-5.100" />
                </Glyph>
              </NavButton>
              <NavButton>
                <Glyph $w={18} viewBox="0 0 18 18" $stroke="#111" $sw={1.5}>
                  <circle cx="7" cy="7" r="6.200" />
                  <path d="M11.500 11.500l6 6" />
                </Glyph>
              </NavButton>
            </NavGroup>
            <AddressBar>
              <Glyph $w={20} viewBox="0 0 20 20" $stroke="#6b6b6b" $sw={1.2}>
                <circle cx="10" cy="10" r="9.300" />
                <path d="M10 8.800v5.400M10 5.800v.3" strokeWidth="1.500" />
              </Glyph>
              <Url $size={16.6} $track={-0.1} $color="#757575">
                <Label $size={16.6} $track={-0.1} $color="#000">127.0.0.1</Label>:5500/html%20proj/final.html
              </Url>
              <BarAction>
                <Glyph $w={18} viewBox="0 0 18 18" $stroke="#6b6b6b" $sw={1.3}>
                  <circle cx="7" cy="7" r="6.200" />
                  <path d="M11.500 11.500l6 6M4 7h6" />
                </Glyph>
              </BarAction>
              <BarAction>
                <Glyph $w={19} $h={18} viewBox="0 0 19 18" $stroke="#6b6b6b" $sw={1.3}>
                  <path d="M.6 17L6.600 2l6 15M2.800 11.500h7.600M11 2.200a7 7 0 0 1 2.800 5.700M14.500.5a10 10 0 0 1 4 7.800" />
                </Glyph>
              </BarAction>
              <BarAction>
                <Glyph $w={20} viewBox="0 0 20 20" $stroke="#6b6b6b" $sw={1.3}>
                  <path d="M10 .9l2.800 5.900 6.500.9-4.700 4.500 1.200 6.500L10 15.600l-5.800 3.100 1.200-6.500L.7 7.700l6.500-.9z" />
                </Glyph>
              </BarAction>
            </AddressBar>
            <ToolGroup>
              <ToolButton $w={57}><Extension /></ToolButton>
              <ToolDivider />
              <ToolButton $w={56}><SplitScreen /></ToolButton>
              <ToolButton><Favorites /></ToolButton>
              <ToolButton><Collections /></ToolButton>
              <ToolButton $w={56.5}><Essentials /></ToolButton>
            </ToolGroup>
            <MenuButton>
              <Dot />
              <Dot />
              <Dot />
            </MenuButton>
          </Toolbar>

          <Bookmarks>
            <Bookmark $w={155}>
              <BookmarkIcon $w={30}>
                <Glyph $w={20} $h={19} viewBox="0 0 20 19" $stroke="#1a1a1a" $sw={1.4}>
                  <path d="M6.500 16.800H3A2.300 2.300 0 0 1 .7 14.500V3A2.300 2.300 0 0 1 3 .7h3.200c.7 0 1.200.3 1.700.8l1.300 1.300H17a2.300 2.300 0 0 1 2.300 2.300v7M.7 5.500h5.200c.7 0 1.200-.3 1.700-.8l1.800-1.900M9.500 16h9.800M11.800 13.600L9.400 16l2.400 2.400M17 13.600l2.400 2.400-2.400 2.400" />
                </Glyph>
              </BookmarkIcon>
              <Label $track={-0.06}>Import favorites</Label>
            </Bookmark>
            <BookmarkDivider />
            {bookmarks.map((b) => (
              <Bookmark key={b.name} $w={b.w}>
                <BookmarkIcon $w={b.slot}>{b.icon || <PageIcon />}</BookmarkIcon>
                <Label $track={b.track}>{b.name}</Label>
              </Bookmark>
            ))}
          </Bookmarks>

          <Viewport>
            <SiteNav>
              <Label $size={19}>Home</Label>
              <Label $size={19} $track={-0.06}>TrendingCakes</Label>
              <Label $size={19} $track={0.02}>CustomisedCakes</Label>
              <Label $size={19} $track={0.12}>ContactUS</Label>
            </SiteNav>
            <Article>
              <Title>Welcome to Our CAKEBUZZ website</Title>
              <Paragraph>
                <Line $track={-0.05}>Explore varities of with us.</Line>
              </Paragraph>
              <Heading>popular cakes</Heading>
              <CakeList>
                <Cake $track={-0.2}>tresleches</Cake>
                <Cake $track={-0.2}>Brownies</Cake>
                <Cake>Muffins</Cake>
                <Cake>choco truffle</Cake>
              </CakeList>
              <Heading $track={-0.35}>Trending cakes</Heading>
              <Paragraph>
                <Line $track={-0.046}>
                  Fusion cakes: These cakes combine different cultures and exotic ingredients. Texture-driven cakes:
                  These cakes focus on the interaction of different textures. Lambeth cakes: These cakes
                </Line>
                <Line $track={0.028}>
                  feature an over-piping technique, which involves using two or more buttercream layers piped on top of
                  one another. Shaped cakes: Heart-shaped cakes are a top decorated cake trend
                </Line>
                <Line>for 2024..</Line>
              </Paragraph>
              <Heading $track={-0.12}>Contact us</Heading>
              <Paragraph>
                <Line>Get in touch with us for any orders</Line>
              </Paragraph>
            </Article>
            <SiteFooter>
              <Label $size={17} $track={0.12}>© 2024 Cake Buzz Website</Label>
            </SiteFooter>
          </Viewport>
        </MainColumn>

        <Sidebar>
          <SideSlot $h={48.5}>
            <Copilot />
          </SideSlot>
          {sideApps.map(({ Icon, h }, i) => (
            <SideSlot key={i} $h={h}>
              <Icon />
            </SideSlot>
          ))}
          <SideSlot $h={30}>
            <SideDivider />
          </SideSlot>
          <SideSlot>
            <Glyph $w={15} viewBox="0 0 15 15" $stroke="#333" $sw={1.3}>
              <path d="M7.500 0v15M0 7.500h15" />
            </Glyph>
          </SideSlot>
          <SideBottom>
            <SideDivider />
            <SideSlot $h={55}>
              <Gear />
            </SideSlot>
          </SideBottom>
        </Sidebar>
      </BrowserBody>

      <Taskbar>
        <Weather>
          <WeatherIcon />
          <TwoLines $top={3}>
            <Label $track={0.1}>86°F</Label>
            <Label $track={0.15} $color="#5f5b5d">Mostly sunny</Label>
          </TwoLines>
        </Weather>
        <Apps>
          <AppSlot>
            <StartIcon />
          </AppSlot>
          <SearchPill>
            <Glyph $w={18} viewBox="0 0 18 18" $stroke="#222" $sw={2}>
              <circle cx="8" cy="8" r="7" />
              <path d="M13 13l4.300 4.300" strokeWidth="2.500" />
            </Glyph>
            <Label $size={16.4} $color="#5c5858">Search</Label>
            <ShellSlot>
              <Shell />
            </ShellSlot>
          </SearchPill>
          <AppSlot>
            <TaskView />
          </AppSlot>
          {runningApps.map(({ Icon, running, active }, i) => (
            <AppSlot key={i}>
              {active ? (
                <ActiveTile>
                  <Icon />
                </ActiveTile>
              ) : (
                <Icon />
              )}
              {(running || active) && <Running $active={active} />}
            </AppSlot>
          ))}
        </Apps>
        <Tray>
          <TraySlot $w={36}>
            <Glyph $w={12} $h={7} viewBox="0 0 12 7" $stroke="#1c1c1c" $sw={1.7}>
              <path d="M.3 6.500L6 .8l5.700 5.700" />
            </Glyph>
          </TraySlot>
          <TraySlot $w={44}>
            <Glyph $w={20} $h={17} viewBox="0 0 20 17">
              <path d="M4.500 13A4 4 0 0 1 4 5.300 6.500 6.500 0 0 1 16 4.500 4.500 4.500 0 0 1 18 12z" fill="#8d8d8d" stroke="#333" strokeWidth="1.300" />
              <path d="M3 12c4-1 7-4.500 13-5" stroke="#d9d9d9" strokeWidth="2" />
              <circle cx="14.500" cy="11.500" r="5.500" fill="#d6202c" />
              <path d="M12.500 9.500l4 4M16.500 9.500l-4 4" stroke="#fff" strokeWidth="1.500" />
            </Glyph>
          </TraySlot>
          <TraySlot $w={52}>
            <TwoLines $align="center" $bottom={1}>
              <Label $track={-0.1}>ENG</Label>
              <Label>IN</Label>
            </TwoLines>
          </TraySlot>
          <TraySlot $w={42}>
            <Glyph $w={20} $h={15} viewBox="0 0 20 15" $stroke="#1c1c1c" $sw={1.4}>
              <path d="M.7 5.600a13 13 0 0 1 18.600 0M3.700 8.500a9 9 0 0 1 12.600 0M6.600 11.200a5 5 0 0 1 6.800 0" />
              <circle cx="10" cy="13" r="1.300" fill="#1c1c1c" />
            </Glyph>
          </TraySlot>
          <TraySlot $w={18}>
            <Glyph $w={20} $h={16} viewBox="0 0 20 16" $stroke="#1c1c1c" $sw={1.3}>
              <path d="M.7 5.500h3L8.500 1v14l-4.800-4.500h-3zM11.500 5a4.500 4.500 0 0 1 0 6M14 2.800a7.500 7.500 0 0 1 0 10.400M16.500.8a10.500 10.500 0 0 1 0 14.400" />
            </Glyph>
          </TraySlot>
          <TraySlot $w={42}>
            <Glyph $w={20} $h={12} viewBox="0 0 20 12" $stroke="#1c1c1c" $sw={1.4}>
              <rect x=".7" y=".7" width="16.600" height="10.600" rx="2.500" />
              <rect x="3.200" y="3.200" width="11" height="5.600" rx="1" fill="#1c1c1c" />
              <path d="M19.200 4.500v3" strokeWidth="1.800" />
            </Glyph>
          </TraySlot>
          <TraySlot $w={87} $justify="flex-end">
            <TwoLines $align="flex-end" $bottom={2}>
              <Label>10:49</Label>
              <Label $track={0.4}>12-07-2024</Label>
            </TwoLines>
          </TraySlot>
          <TraySlot $w={39}>
            <Glyph $w={17} $h={18} viewBox="0 0 17 18" $stroke="#1c1c1c" $sw={1.3}>
              <path d="M11 1.600A6 6 0 0 0 2.500 7v4.500L.8 14.500h14l-1.500-3V10M5.500 14.800a2.400 2.400 0 0 0 4.600 0M6.300 6h3.400l-3.400 4.500h3.400M12.500.7h3.500l-3.500 4.500h3.500" />
            </Glyph>
          </TraySlot>
          <TraySlot $w={41} $justify="flex-end">
            <Copilot size={28} pre />
          </TraySlot>
        </Tray>
      </Taskbar>
    </Screen>
  );
}
